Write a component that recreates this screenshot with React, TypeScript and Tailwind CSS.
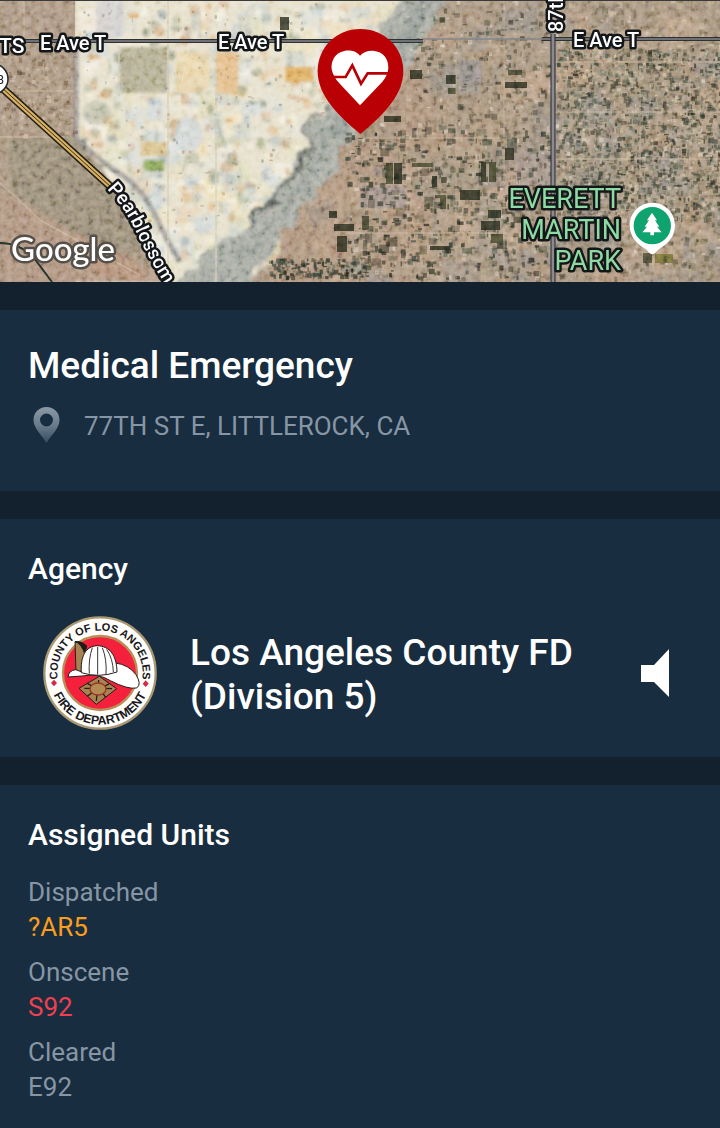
import type { ReactNode } from 'react'

type Patch = { x: number; y: number; w: number; h: number; fill: string; o: number }

// small deterministic generator so the terrain is the same on each render
function makeRand(seed: number) {
  let a = seed
  return () => {
    a = (a + 0x6d2b79f5) | 0
    let t = Math.imul(a ^ (a >>> 15), 1 | a)
    t = (t + Math.imul(t ^ (t >>> 7), 61 | t)) ^ t
    return ((t ^ (t >>> 14)) >>> 0) / 4294967296
  }
}

function scatter(
  seed: number,
  count: number,
  area: [number, number, number, number],
  size: [number, number],
  colors: string[],
  opacity: number
): Patch[] {
  const rand = makeRand(seed)
  const [x, y, w, h] = area
  return Array.from({ length: count }, () => ({
    x: x + rand() * w,
    y: y + rand() * h,
    w: size[0] + rand() * (size[1] - size[0]),
    h: size[0] + rand() * (size[1] - size[0]),
    fill: colors[Math.floor(rand() * colors.length)],
    o: opacity * (0.5 + rand() * 0.5),
  }))
}

const PALE = ['#efe3c4', '#e3e1d4', '#f1dfb4', '#cdd8dc', '#e6cfae', '#dfdab8', '#c6cec6', '#f3f0e4', '#dadfdf']
const TAN = ['#ab9378', '#9a8770', '#b89c80', '#8f867c', '#bfa288', '#a09480', '#b18f74', '#968e86']
const DARK = ['#20251c', '#32362b', '#2b3126', '#45463c', '#37463c']

const paleFields = scatter(7, 200, [78, 0, 270, 262], [8, 28], PALE, 0.8)
const paleSpots = scatter(21, 480, [78, 0, 265, 255], [2, 12], ['#dba968', '#a8ac86', '#8f9ea3', '#cf9a6a', '#8b9678', '#fbf8ec', '#b0bfca', '#faf3dc'], 0.65)
const paleSpecks = scatter(22, 160, [82, 0, 240, 240], [1, 4], ['#6e7a66', '#8d8468', '#a4714b', '#67706c'], 0.55)
const tanFields = scatter(33, 200, [412, 0, 308, 282], [12, 36], TAN, 0.7)
const lowTan = scatter(35, 90, [310, 120, 110, 160], [8, 24], TAN, 0.7)
const darkSpots = scatter(51, 520, [345, 130, 205, 148], [1, 6], DARK, 0.75)
const darkClumps = scatter(53, 60, [350, 125, 200, 140], [4, 10], DARK, 0.55)
const upperSpots = scatter(52, 170, [415, 8, 135, 125], [1, 6], DARK, 0.6)
const townSpots = scatter(64, 2300, [556, 48, 166, 172], [1, 5], [...DARK, '#565d4b', '#6d705c', '#d8c9ae', '#c8b191', '#8b8674', '#7d8a7e'], 0.7)
const lightSpots = scatter(78, 420, [350, 0, 372, 282], [1, 5], ['#e2d5c0', '#d3bba2', '#e8dfd0'], 0.6)
const lowSpots = scatter(85, 200, [268, 258, 100, 18], [1, 5], [...DARK, '#8e948a'], 0.75)
const lowRight = scatter(88, 150, [556, 215, 164, 62], [2, 6], ['#77694f', '#8a7a62', '#4d4c3a', '#cbb08e'], 0.6)
const leftSpots = scatter(92, 150, [0, 50, 74, 85], [1, 5], ['#7d5c46', '#d8c6ac', '#6a5142', '#c9b59b'], 0.65)
const topSpots = scatter(97, 130, [560, 0, 160, 52], [2, 7], ['#5f5e4a', '#857a60', '#d3bd9b', '#94866e'], 0.6)

// planted plots and larger buildings
const plots: [number, number, number, number][] = [
  [386, 163, 7, 21], [394, 163, 8, 21], [481, 162, 5, 20], [489, 162, 7, 20], [280, 17, 9, 13],
  [432, 176, 5, 11], [440, 195, 6, 14], [488, 210, 13, 8], [481, 221, 19, 9], [491, 234, 12, 9],
  [329, 211, 8, 7], [334, 224, 20, 7], [362, 216, 7, 13], [337, 236, 10, 16], [384, 116, 17, 6],
  [412, 163, 20, 4], [460, 190, 20, 10], [446, 75, 10, 9], [448, 88, 8, 6], [410, 70, 12, 9],
  [430, 246, 20, 4], [508, 70, 14, 5], [505, 82, 22, 6], [505, 148, 9, 12], [643, 253, 9, 10],
]

function Patches({ items, round = false }: { items: Patch[]; round?: boolean }) {
  return (
    <>
      {items.map((p, i) => (
        <rect
          key={i}
          x={p.x}
          y={p.y}
          width={p.w}
          height={p.h}
          rx={round ? Math.min(p.w, p.h) / 2 : 0}
          fill={p.fill}
          opacity={p.o}
        />
      ))}
    </>
  )
}

function Terrain() {
  return (
    <g>
      <rect width="720" height="282" fill="#a4917b" />
      <path d="M75 0 H440 L345 130 L240 282 H75Z" fill="#e6dfca" />
      <g filter="url(#soft)">
        <Patches items={paleFields} />
        <Patches items={scatter(23, 40, [345, 0, 60, 45], [8, 20], PALE, 0.8)} />
        <Patches items={paleSpots} round />
        <rect x="120" y="47" width="48" height="46" fill="#aca68a" opacity="0.9" />
        <rect x="96" y="0" width="28" height="38" fill="#cfcdd0" opacity="0.8" />
        <rect x="216" y="52" width="22" height="42" fill="#e3b981" opacity="0.9" />
        <rect x="176" y="52" width="34" height="40" fill="#e9d19c" opacity="0.6" />
        <rect x="140" y="142" width="28" height="14" fill="#d8bd7c" opacity="0.8" />
        <rect x="144" y="160" width="20" height="11" fill="#84a055" />
        <rect x="285" y="67" width="28" height="15" fill="#dcab62" />
        <ellipse cx="97" cy="113" rx="14" ry="12" fill="#a0a188" opacity="0.5" />
        <ellipse cx="188" cy="135" rx="14" ry="18" fill="#c3d0da" opacity="0.6" />
        <Patches items={tanFields} />
      </g>
      {/* dry wash running to the south west */}
      <g filter="url(#wash)">
        <path d="M345 95 L400 60 L430 90 L430 290 H262 L300 200Z" fill="#ab9079" />
        <Patches items={lowTan} />
        <path d="M405 -6 L456 -6 Q422 44 404 70 L356 136 Q334 160 320 190 Q292 225 268 250 L246 290 L172 290 Q190 262 236 232 Q275 200 296 160 Q312 118 345 88Z" fill="#a5a89f" />
        <path d="M425 -6 L442 -6 Q412 40 395 62 L345 126 L302 192 L250 252 L215 275 Q285 215 305 175 L345 100Z" fill="#878f8b" opacity="0.6" />
        <path d="M318 110 Q305 135 300 158 Q285 195 250 222" fill="none" stroke="#4b514c" strokeWidth="4" opacity="0.7" />
        <path d="M300 282 Q330 240 350 180" fill="none" stroke="#b99c82" strokeWidth="10" opacity="0.4" />
      </g>
      {/* scrub land west of the highway */}
      <g filter="url(#soft)">
        <path d="M0 0 H74 V135 L110 180 L172 282 H0Z" fill="#a8937d" />
        <path d="M0 0 H24 V38 H0Z M27 0 H73 V38 H27Z" fill="#ab9480" />
        <path d="M8 138 L74 135 L150 240 L120 268 L60 225 L10 190Z" fill="#988b76" />
        <path d="M0 192 L35 210 L95 245 L165 275 L170 282 H0Z" fill="#ad917b" />
        <path d="M75 232 L130 255 L150 282 L95 275Z" fill="#b58770" opacity="0.4" />
        <path d="M76 40 V138 Q98 160 120 174 Q146 190 162 230 L180 262" fill="none" stroke="#8a8684" strokeWidth="5" opacity="0.8" />
      </g>
      <g filter="url(#fine)">
        <Patches items={leftSpots} />
        <Patches items={paleSpecks} round />
        <path d="M24 0 V50 M0 91 H74 M0 137 H68 M0 183 Q20 200 40 220 Q90 248 140 275" stroke="#cdb99d" strokeWidth="1.5" fill="none" opacity="0.6" />
        <path d="M168 0 V282 M119 45 V96 M216 90 V282" stroke="#cfc8b2" strokeWidth="1.5" opacity="0.8" />
        <rect x="360" y="186" width="46" height="22" fill="#9e918c" opacity="0.7" />
        <rect x="515" y="150" width="36" height="36" fill="#a3938a" opacity="0.7" />
        <rect x="460" y="60" width="22" height="22" fill="#938c88" opacity="0.8" />
        <Patches items={lightSpots} />
        <Patches items={darkSpots} />
        <Patches items={darkClumps} />
        <Patches items={upperSpots} />
        <Patches items={townSpots} />
        <Patches items={topSpots} />
        <Patches items={lowRight} />
        <Patches items={lowSpots} />
        {plots.map(([x, y, w, h], i) => (
          <rect key={i} x={x} y={y} width={w} height={h} fill={i % 3 ? '#2c2f22' : '#43452f'} opacity="0.85" />
        ))}
        <rect x="655" y="254" width="18" height="9" fill="#77713d" />
        <path d="M407 60 V282 M456 52 V282 M504 0 V282 M640 60 V190 M690 0 V282" stroke="#c0ab90" opacity="0.6" />
        <path d="M555 62 H720 M555 112 H720 M555 159 H720 M365 138 H500 M345 233 H500" stroke="#cdb99c" opacity="0.7" />
      </g>
      <rect width="720" height="282" filter="url(#grain)" opacity="0.25" className="mix-blend-overlay" />
      <rect width="720" height="1" fill="#3b3a38" />
    </g>
  )
}

function Label({
  children,
  size = 21,
  color = '#ffffff',
  weight = 500,
  ...rest
}: {
  children: ReactNode
  size?: number
  color?: string
  weight?: number
  x?: number
  y?: number
  transform?: string
  textAnchor?: 'start' | 'middle' | 'end'
}) {
  return (
    <text
      {...rest}
      fontSize={size}
      fontWeight={weight}
      fill={color}
      stroke="#14171a"
      strokeWidth="5"
      strokeLinejoin="round"
      paintOrder="stroke"
    >
      {children}
    </text>
  )
}

function IncidentPin() {
  return (
    <g transform="translate(305 20) scale(0.3333)">
      <path d="M166 27 C95 27 38 82 38 153 C38 225 95 283 166 342 C237 283 295 225 295 153 C295 82 237 27 166 27Z" fill="#b90005" />
      <path
        d="M165 107 C152 91 131 90 118 93 C91 98 77 122 80 148 C83 164 91 177 103 190 L165 256 L228 190 C240 177 249 162 250 144 C251 118 235 96 209 93 C191 91 176 95 165 107Z"
        fill="#ffffff"
      />
      <path d="M76 171 H122 L142 136 L168 191 L188 160 H254" fill="none" stroke="#b90005" strokeWidth="8" />
    </g>
  )
}

function ParkPin() {
  return (
    <g transform="translate(480 0) scale(0.3333)">
      <path d="M517 608 C479 608 449 638 449 676 C449 711 471 731 492 744 Q502 750 506 757 Q517 768 528 757 Q532 750 542 744 C563 731 585 711 585 676 C585 638 555 608 517 608Z" fill="#ffffff" />
      <circle cx="517" cy="677" r="56" fill="#0fa36f" />
      <path d="M516 638 L501 661 H507 L494 680 H501 L487 697 H511 V706 H522 V697 H545 L531 680 H538 L525 661 H531Z" fill="#ffffff" />
    </g>
  )
}

function IncidentMap() {
  return (
    <svg
      viewBox="0 0 720 282"
      preserveAspectRatio="xMidYMid slice"
      className="block h-[282px] w-full"
      role="img"
      aria-label="Satellite map of the incident location"
    >
      <defs>
        <filter id="soft">
          <feGaussianBlur stdDeviation="1.5" />
        </filter>
        <filter id="wash">
          <feTurbulence type="fractalNoise" baseFrequency="0.05" numOctaves="3" seed="3" result="noise" />
          <feDisplacementMap in="SourceGraphic" in2="noise" scale="22" xChannelSelector="R" yChannelSelector="G" />
          <feGaussianBlur stdDeviation="1.8" />
        </filter>
        <filter id="fine">
          <feGaussianBlur stdDeviation="0.7" />
        </filter>
        <filter id="grain" x="0" y="0" width="100%" height="100%">
          <feTurbulence type="fractalNoise" baseFrequency="0.16" numOctaves="3" seed="4" />
          <feColorMatrix values="2 0 0 0 -0.5  1.8 0.2 0 0 -0.5  1.7 0 0.3 0 -0.5  0 0 0 0 1" />
        </filter>
      </defs>

      <Terrain />

      <g fill="none">
        <path d="M0 41 H423 M542 39 H720" stroke="#2f3133" strokeWidth="4" />
        <path d="M0 41 H423 M423 39 H720" stroke="#85878a" strokeWidth="1.5" />
        <path d="M553 34 V282" stroke="#26282b" strokeWidth="5" />
        <path d="M553 34 V282" stroke="#8b8a92" strokeWidth="3" />
        <path d="M0 86 L112 188" stroke="#241f17" strokeWidth="8" />
        <path d="M0 86 L112 188" stroke="#d8b163" strokeWidth="5" />
        <path d="M0 86 L112 188" stroke="#352d1e" strokeWidth="1" />
        <path d="M0 243 Q20 243 34 258 L52 282" stroke="#27372d" strokeWidth="2" />
      </g>

      <circle cx="-7" cy="79" r="15" fill="#ffffff" stroke="#24272a" strokeWidth="1.5" />
      <text x="4" y="84" textAnchor="end" fontSize="13" fill="#24272a">
        138
      </text>

      <Label x={-1} y={53}>TS</Label>
      <Label x={40} y={50} size={20}>E Ave T</Label>
      <Label x={218} y={49} size={20}>E Ave T</Label>
      <Label x={573} y={47} size={20}>E Ave T</Label>
      <Label transform="translate(563 32) rotate(-90)" size={20}>87th St E</Label>

      <path id="highway" d="M107 189 Q127 210 139 238 Q152 265 176 301" fill="none" />
      <text fontSize="19" fontWeight={500} fill="#ffffff" stroke="#14171a" strokeWidth="5" strokeLinejoin="round" paintOrder="stroke">
        <textPath href="#highway">Pearblossom</textPath>
      </text>

      <Label x={621} y={208} size={27} weight={400} color="#8ddba3" textAnchor="end">EVERETT</Label>
      <Label x={621} y={239} size={27} weight={400} color="#8ddba3" textAnchor="end">MARTIN</Label>
      <Label x={621} y={270} size={27} weight={400} color="#8ddba3" textAnchor="end">PARK</Label>

      <text
        x="11"
        y="261"
        fontSize="33"
        fontWeight={500}
        fill="#ffffff"
        stroke="#55504a"
        strokeWidth="5"
        strokeLinejoin="round"
        paintOrder="stroke"
        className="font-['Lato',sans-serif]"
      >
        Google
      </text>

      <ParkPin />
      <IncidentPin />
    </svg>
  )
}

function LocationIcon() {
  return (
    <svg viewBox="0 0 27 36" className="h-9 w-[27px] shrink-0" aria-hidden="true">
      <defs>
        <linearGradient id="pin" x1="0" y1="0" x2="0" y2="1">
          <stop offset="0" stopColor="#8d99a5" />
          <stop offset="0.5" stopColor="#697c8d" />
          <stop offset="1" stopColor="#344c60" />
        </linearGradient>
      </defs>
      <path
        fillRule="evenodd"
        fill="url(#pin)"
        d="M13.500 0C6 0 0.500 5.500 0.500 13C0.500 21 8 27 13.500 36C19 27 26.500 21 26.500 13C26.500 5.500 21 0 13.500 0ZM13.500 6.500A6.500 6.500 0 1 1 13.500 19.500A6.500 6.500 0 1 1 13.500 6.500Z"
      />
    </svg>
  )
}

function AgencySeal() {
  return (
    <svg
      viewBox="65 45 348 348"
      className="size-[116px] shrink-0"
      role="img"
      aria-label="County of Los Angeles Fire Department seal"
    >
      <circle cx="239" cy="219" r="167" fill="#fffefa" stroke="#a99873" strokeWidth="7" />
      <circle cx="239" cy="219" r="111" fill="#f5203c" stroke="#b98f59" strokeWidth="7" />
      <path id="seal-top" d="M121 269 A128 128 0 1 1 357 269" fill="none" />
      <path id="seal-bottom" d="M87 238 A153 153 0 0 0 391 238" fill="none" />
      <g fontWeight={700} fill="#17171d" textAnchor="middle" className="font-['Liberation_Sans',sans-serif]">
        <text fontSize="33">
          <textPath href="#seal-top" startOffset="50%">COUNTY OF LOS ANGELES</textPath>
        </text>
        <text fontSize="37">
          <textPath href="#seal-bottom" startOffset="50%">FIRE DEPARTMENT</textPath>
        </text>
      </g>
      <path d="M101 239 L110 249 L101 259 L92 249Z M376 241 L385 251 L376 261 L367 251Z" fill="#d62743" />
      {/* helmet */}
      <path d="M164 125 L198 137 L196 160 L180 222 L167 215Z" fill="#a78351" stroke="#241d18" strokeWidth="3" />
      <path d="M164 123 Q185 121 200 138 L192 163 Q184 133 164 125Z" fill="#1d1b1b" />
      <path d="M143 231 Q145 211 166 209 L185 216 Q260 221 285 189 Q325 194 347 224 Q365 253 349 264 Q322 269 270 242 Q235 219 185 228Z" fill="#ffffff" stroke="#241d18" strokeWidth="3" />
      <path d="M183 218 C180 170 195 139 230 137 C270 138 289 168 290 216 Q235 235 183 218Z" fill="#ffffff" stroke="#241d18" strokeWidth="3" />
      <path d="M216 143 Q204 177 207 221 M232 141 V224 M246 143 Q260 179 257 222 M259 148 Q278 176 279 216" fill="none" stroke="#3a3532" strokeWidth="3" />
      <path d="M176 265 L237 229 L289 266 L228 313Z" fill="#a78351" stroke="#241d18" strokeWidth="3" />
      <path d="M192 265 L218 265 M247 265 L275 266 M235 240 L234 255 M230 282 L228 303 M201 250 L222 262 M267 251 L247 262 M201 289 L218 276 M256 292 L246 278" stroke="#241d18" strokeWidth="4" />
      <ellipse cx="233" cy="267" rx="24" ry="18" fill="#b58b54" stroke="#9b3626" strokeWidth="4" />
    </svg>
  )
}

const units = [
  { status: 'Dispatched', unit: '?AR5', color: 'text-[#fb9d1c]' },
  { status: 'Onscene', unit: 'S92', color: 'text-[#f0404f]' },
  { status: 'Cleared', unit: 'E92', color: 'text-[#8796a5]' },
]

export default function App() {
  return (
    <main className="flex min-h-screen flex-col gap-7 bg-[#12212d] font-['Roboto',sans-serif] text-white">
      <IncidentMap />

      <section className="bg-[#182d3f] px-7 pt-8 pb-12">
        <h1 className="text-[37px] leading-[48px] font-medium">Medical Emergency</h1>
        <div className="mt-4 flex items-center gap-6 pl-[5px]">
          <LocationIcon />
          <p className="pt-1 text-[26px] leading-[33px] text-[#8796a5]">77TH ST E, LITTLEROCK, CA</p>
        </div>
      </section>

      <section className="bg-[#182d3f] px-7 pt-8 pb-[26px]">
        <h2 className="text-[30px] leading-9 font-medium">Agency</h2>
        <div className="mt-7 flex items-center pr-[22px] pl-[14px]">
          <AgencySeal />
          <p className="ml-8 flex-1 pt-[3px] text-[37px] leading-[44px] font-medium">
            Los Angeles County FD (Division 5)
          </p>
          <button type="button" aria-label="Play agency audio" className="shrink-0">
            <svg viewBox="0 0 29 48" className="h-12 w-[29px]" aria-hidden="true">
              <path d="M0 16H13L28 0V48L13 33H0Z" fill="#ffffff" />
            </svg>
          </button>
        </div>
      </section>

      <section className="flex-1 bg-[#182d3f] px-7 pt-8 pb-5">
        <h2 className="text-[30px] leading-9 font-medium">Assigned Units</h2>
        <dl className="mt-[22px] flex flex-col gap-[10px] text-[26px] leading-[35px]">
          {units.map((u) => (
            <div key={u.status}>
              <dt className="text-[#8796a5]">{u.status}</dt>
              <dd className={u.color}>{u.unit}</dd>
            </div>
          ))}
        </dl>
      </section>
    </main>
  )
}
